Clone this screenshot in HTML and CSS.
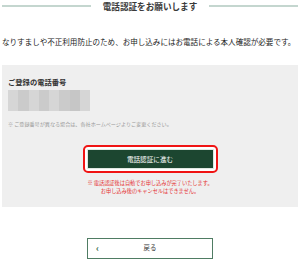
FILE: index.html
```html
<!DOCTYPE html>
<html lang="ja">
<head>
<meta charset="utf-8">
<title>電話認証</title>
<link rel="stylesheet" href="styles.css">
</head>
<body>
<div class="page">
  <div class="heading">
    <span class="heading-line"></span>
    <h1 class="heading-text">電話認証をお願いします</h1>
    <span class="heading-line"></span>
  </div>
  <p class="lead">なりすましや不正利用防止のため、お申し込みにはお電話による本人確認が必要です。</p>
  <section class="panel">
    <h2 class="panel-label">ご登録の電話番号</h2>
    <div class="phone-blur">
      <span class="s1"></span><span class="s2"></span><span class="s1"></span><span class="s2"></span><span class="s1"></span><span class="s2"></span><span class="s3"></span><span class="s1"></span>
    </div>
    <p class="panel-note">※ ご登録番号が異なる場合は、各社ホームページよりご変更ください。</p>
    <div class="cta-wrap">
      <div class="cta-ring">
        <button class="cta">電話認証に進む</button>
      </div>
    </div>
    <p class="warn">※ 電話認証後は自動でお申し込みが完了いたします。<br>お申し込み後のキャンセルはできません。</p>
  </section>
  <div class="back-wrap">
    <button class="back"><span class="back-arrow">‹</span><span class="back-text">戻る</span></button>
  </div>
</div>
</body>
</html>
```
FILE: styles.css
```css
* { box-sizing: border-box; }
html, body { margin: 0; padding: 0; background: #fff; }
body {
  font-family: "Noto Sans CJK JP", "Noto Sans", sans-serif;
  color: #333;
  width: 300px;
  height: 261px;
  overflow: hidden;
}
.page { width: 300px; }
.heading {
  display: flex;
  align-items: center;
  padding: 0 2px;
  height: 12px;
}
.heading-line {
  flex: 1;
  height: 1.5px;
  background: #c4d6cf;
}
.heading-text {
  margin: 0 12px;
  font-size: 8.6px;
  line-height: 12px;
  font-weight: 700;
  color: #3a3a3a;
}
.lead {
  margin: 25px 0 18px 2px;
  font-size: 7.55px;
  line-height: 10px;
  color: #222;
  white-space: nowrap;
}
.panel {
  margin: 0 2px;
  background: #efefef;
  padding: 12px 6px 12px 6px;
  height: 142px;
}
.panel-label {
  margin: 0;
  font-size: 7.3px;
  line-height: 10px;
  font-weight: 700;
  color: #333;
}
.phone-blur {
  display: flex;
  width: 82px;
  height: 21px;
  margin-top: 3px;
}
.phone-blur span { flex: 1; }
.s1 { background: #d6d6d6; }
.s2 { background: #cbcbcb; }
.s3 { background: #c6c6c6; }
.panel-note {
  margin: 9px 0 0 0;
  font-size: 5.1px;
  line-height: 8px;
  color: #999;
  white-space: nowrap;
}
.cta-wrap {
  display: flex;
  justify-content: center;
  margin-top: 17px;
}
.cta-ring {
  border: 2px solid #f01414;
  border-radius: 5px;
  padding: 2px;
  background: #fff;
  width: 135px;
  height: 28px;
}
.cta {
  display: block;
  width: 100%;
  height: 100%;
  border: 1px solid #dfe8e2;
  background: #1c4630;
  color: #fff;
  font-family: inherit;
  font-size: 6.6px;
  line-height: 1;
  padding: 0;
}
.warn {
  margin: 6px 0 0 0;
  text-align: center;
  font-size: 5.2px;
  line-height: 8px;
  color: #e53030;
}
.back-wrap {
  display: flex;
  justify-content: center;
  margin-top: 31px;
}
.back {
  position: relative;
  display: flex;
  align-items: center;
  justify-content: center;
  width: 126px;
  height: 21px;
  border: 1px solid #4f7c63;
  background: #fff;
  font-family: inherit;
  padding: 0;
}
.back-arrow {
  position: absolute;
  left: 8px;
  top: 50%;
  transform: translateY(-55%);
  color: #2f6a4a;
  font-size: 9px;
  font-weight: 700;
  line-height: 1;
}
.back-text {
  font-size: 6.4px;
  color: #333;
  line-height: 1;
}
```
